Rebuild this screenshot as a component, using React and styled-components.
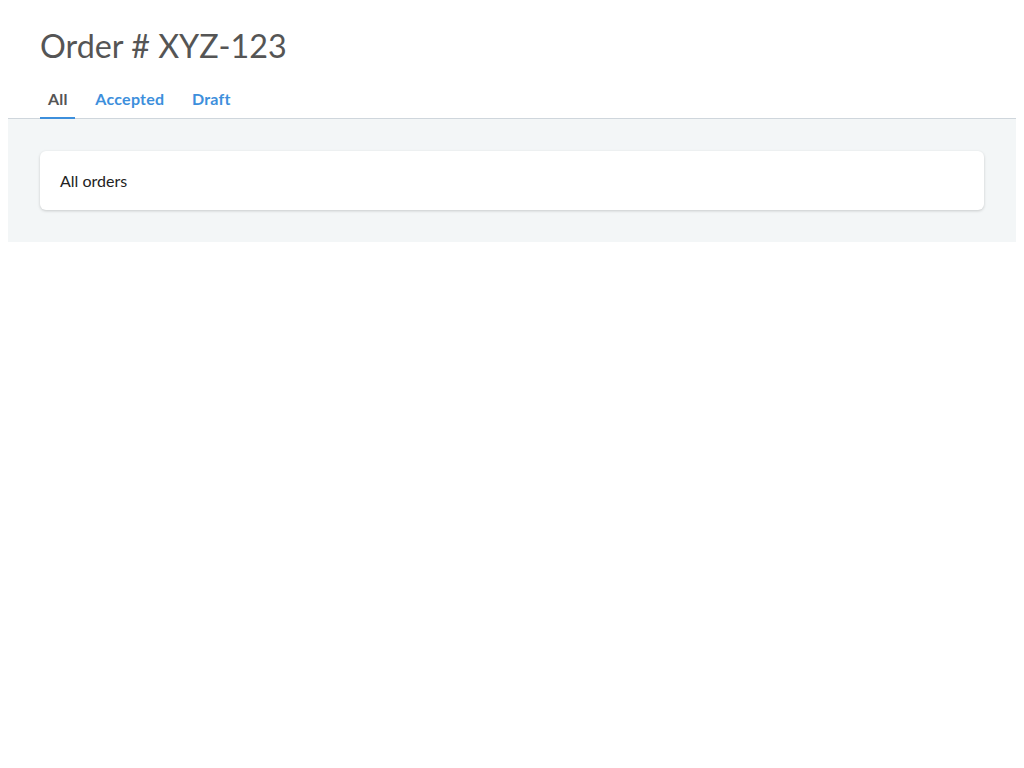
import React, { useState } from "react";
import styled, { createGlobalStyle } from "styled-components";

const Global = createGlobalStyle`
  body {
    margin: 8px;
    font-family: Lato, "Noto Sans", sans-serif;
    background: #fff;
  }
`;

const Page = styled.div`
  display: flex;
  flex-direction: column;
`;

const Header = styled.header`
  padding: 18px 32px 0;
  border-bottom: 1px solid #cfd6dc;
`;

const Title = styled.h1`
  margin: 0 0 16px;
  font-size: 32.3px;
  font-weight: 400;
  line-height: 40px;
  color: #555;
`;

const Tabs = styled.nav`
  display: flex;
  gap: 12px;
`;

const Tab = styled.button`
  appearance: none;
  background: none;
  border: none;
  border-bottom: 2px solid ${(p) => (p.$active ? "#3d8fdc" : "transparent")};
  margin-bottom: -1px;
  padding: 7px 7.5px 8px 8px;
  font-family: inherit;
  font-size: 16px;
  font-weight: 700;
  letter-spacing: 0.25px;
  line-height: 20px;
  color: ${(p) => (p.$active ? "#555" : "#3d8fdc")};
  cursor: pointer;
`;

const Body = styled.main`
  background: #f3f6f7;
  padding: 32px;
`;

const Card = styled.section`
  background: #fff;
  border-radius: 6px;
  box-shadow: 0 1px 3px rgba(0, 0, 0, 0.18);
  padding: 20px 20px;
  font-size: 16px;
  line-height: 19px;
  color: #222;
`;

const tabs = ["All", "Accepted", "Draft"];

export default function App() {
  const [active, setActive] = useState("All");
  return (
    <Page>
      <Global />
      <Header>
        <Title>Order # XYZ-123</Title>
        <Tabs>
          {tabs.map((t) => (
            <Tab key={t} $active={t === active} onClick={() => setActive(t)}>
              {t}
            </Tab>
          ))}
        </Tabs>
      </Header>
      <Body>
        <Card>All orders</Card>
      </Body>
    </Page>
  );
}
